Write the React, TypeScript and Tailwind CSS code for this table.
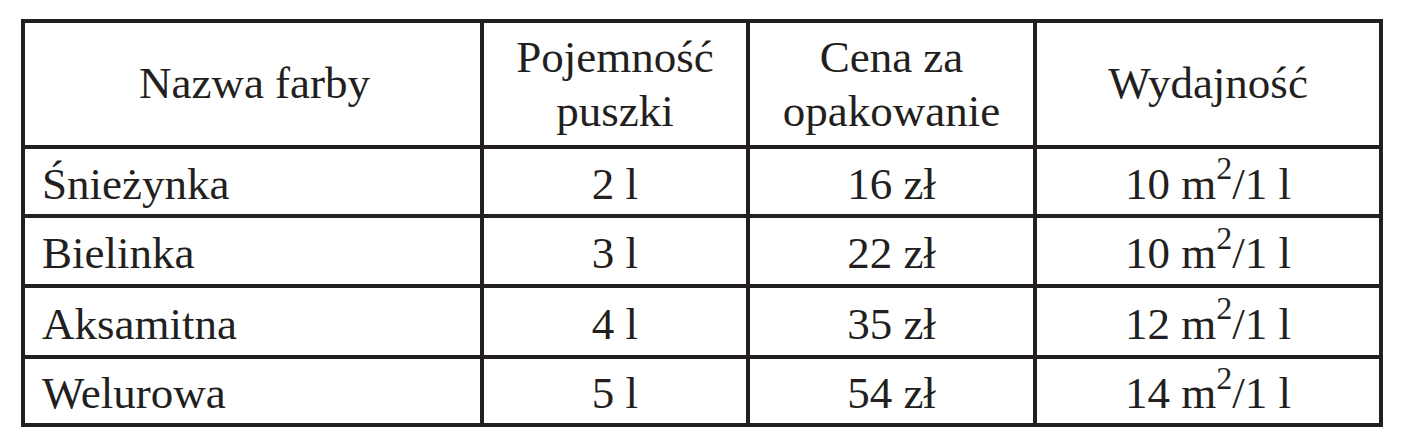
const rows = [
  { name: 'Śnieżynka', volume: '2 l', price: '16 zł', yieldValue: '10' },
  { name: 'Bielinka', volume: '3 l', price: '22 zł', yieldValue: '10' },
  { name: 'Aksamitna', volume: '4 l', price: '35 zł', yieldValue: '12' },
  { name: 'Welurowa', volume: '5 l', price: '54 zł', yieldValue: '14' },
];

function Cell({ children, left = false }: { children: React.ReactNode; left?: boolean }) {
  return (
    <div
      className={
        left
          ? 'flex items-center overflow-hidden bg-white pl-[17px] pt-[5px] leading-none'
          : 'flex items-center justify-center overflow-hidden bg-white pt-[5px] leading-none'
      }
    >
      {children}
    </div>
  );
}

export default function App() {
  return (
    <div className="min-h-[447px] w-[1404px] bg-white pl-[21px] pt-[19px] text-[#231f20] [font-family:'Liberation_Serif',serif]">
      <div className="grid w-[1362px] grid-cols-[455px_262px_283px_342px] grid-rows-[122px_65px_66px_67px_64px] gap-[4px] bg-[#231f20] p-[4px] text-[45px]">
        <div className="flex items-center justify-center bg-white pl-[4px]">Nazwa farby</div>
        <div className="flex flex-col items-center justify-center bg-white text-center leading-[54px]">
          <span>Pojemność</span>
          <span>puszki</span>
        </div>
        <div className="flex flex-col items-center justify-center bg-white text-center leading-[54px]">
          <span>Cena za</span>
          <span>opakowanie</span>
        </div>
        <div className="flex items-center justify-center bg-white">Wydajność</div>

        {rows.map((row) => (
          <div key={row.name} className="contents">
            <Cell left>{row.name}</Cell>
            <Cell>{row.volume}</Cell>
            <Cell>{row.price}</Cell>
            <Cell>
              <span>
                {row.yieldValue} m<sup className="top-[-0.6em] text-[32px]">2</sup>/1 l
              </span>
            </Cell>
          </div>
        ))}
      </div>
    </div>
  );
}
